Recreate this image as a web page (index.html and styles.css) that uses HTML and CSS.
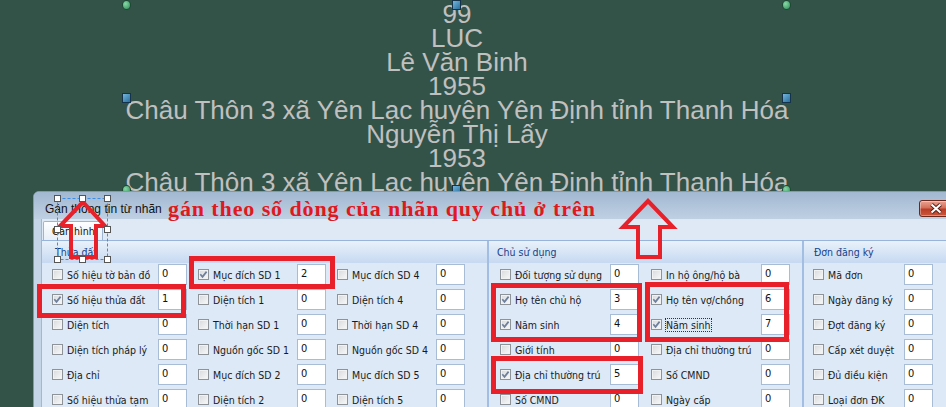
FILE: index.html
```html
<!DOCTYPE html>
<html lang="vi">
<head>
<meta charset="utf-8">
<title>Gán thông tin từ nhãn</title>
<link rel="stylesheet" href="styles.css">
</head>
<body>
<div class="canvas-text">
  <div>99</div>
  <div>LUC</div>
  <div>Lê Văn Binh</div>
  <div>1955</div>
  <div>Châu Thôn 3 xã Yên Lạc huyện Yên Định tỉnh Thanh Hóa</div>
  <div>Nguyễn Thị Lấy</div>
  <div>1953</div>
  <div>Châu Thôn 3 xã Yên Lạc huyện Yên Định tỉnh Thanh Hóa</div>
</div>
<span class="h g h-tl"></span>
<span class="h b h-tc"></span>
<span class="h g h-tr"></span>
<span class="h b h-ml"></span>
<span class="h b h-mr"></span>
<span class="h g h-bl"></span>
<span class="h b h-bc"></span>
<span class="h g h-br"></span>

<div class="dialog">
  <div class="titlebar">
    <span class="title">Gán thông tin từ nhãn</span>
    <span class="close"><svg width="14" height="11" viewBox="0 0 14 11"><path d="M2.5 1.5 L11.5 9.5 M11.5 1.5 L2.5 9.5" stroke="#5b2219" stroke-width="4" fill="none"/><path d="M2.5 1.5 L11.5 9.5 M11.5 1.5 L2.5 9.5" stroke="#fff" stroke-width="2" fill="none"/></svg></span>
  </div>
  <div class="frame">
    <div class="client">
      <div class="tabstrip"><div class="tab">Gán hình</div></div>
      <div class="page">
        <section class="sec">
          <div class="sec-head pad-land">Thửa đất</div>
          <div class="sec-body body-land">
            <div class="f"><i class="cb"></i><span class="lb">Số hiệu tờ bản đồ</span><span class="in">0</span></div>
            <div class="f"><i class="cb on"><svg viewBox="0 0 9 9"><path d="M1.3 4.3 L3.5 6.8 L7.6 1.6"/></svg></i><span class="lb">Mục đích SD 1</span><span class="in">2</span></div>
            <div class="f"><i class="cb"></i><span class="lb">Mục đích SD 4</span><span class="in">0</span></div>

            <div class="f"><i class="cb on"><svg viewBox="0 0 9 9"><path d="M1.3 4.3 L3.5 6.8 L7.6 1.6"/></svg></i><span class="lb">Số hiệu thửa đất</span><span class="in">1</span></div>
            <div class="f"><i class="cb"></i><span class="lb">Diện tích 1</span><span class="in">0</span></div>
            <div class="f"><i class="cb"></i><span class="lb">Diện tích 4</span><span class="in">0</span></div>

            <div class="f"><i class="cb"></i><span class="lb">Diện tích</span><span class="in">0</span></div>
            <div class="f"><i class="cb"></i><span class="lb">Thời hạn SD 1</span><span class="in">0</span></div>
            <div class="f"><i class="cb"></i><span class="lb">Thời hạn SD 4</span><span class="in">0</span></div>

            <div class="f"><i class="cb"></i><span class="lb">Diện tích pháp lý</span><span class="in">0</span></div>
            <div class="f"><i class="cb"></i><span class="lb">Nguồn gốc SD 1</span><span class="in">0</span></div>
            <div class="f"><i class="cb"></i><span class="lb">Nguồn gốc SD 4</span><span class="in">0</span></div>

            <div class="f"><i class="cb"></i><span class="lb">Địa chỉ</span><span class="in">0</span></div>
            <div class="f"><i class="cb"></i><span class="lb">Mục đích SD 2</span><span class="in">0</span></div>
            <div class="f"><i class="cb"></i><span class="lb">Mục đích SD 5</span><span class="in">0</span></div>

            <div class="f"><i class="cb"></i><span class="lb">Số hiệu thửa tạm</span><span class="in">0</span></div>
            <div class="f"><i class="cb"></i><span class="lb">Diện tích 2</span><span class="in">0</span></div>
            <div class="f"><i class="cb"></i><span class="lb">Diện tích 5</span><span class="in">0</span></div>
          </div>
        </section>
        <section class="sec sec-div">
          <div class="sec-head pad-owner">Chủ sử dụng</div>
          <div class="sec-body body-owner">
            <div class="f"><i class="cb"></i><span class="lb">Đối tượng sử dụng</span><span class="in">0</span></div>
            <div class="f"><i class="cb"></i><span class="lb">In hộ ông/hộ bà</span><span class="in">0</span></div>

            <div class="f"><i class="cb on"><svg viewBox="0 0 9 9"><path d="M1.3 4.3 L3.5 6.8 L7.6 1.6"/></svg></i><span class="lb">Họ tên chủ hộ</span><span class="in">3</span></div>
            <div class="f"><i class="cb on"><svg viewBox="0 0 9 9"><path d="M1.3 4.3 L3.5 6.8 L7.6 1.6"/></svg></i><span class="lb">Họ tên vợ/chồng</span><span class="in">6</span></div>

            <div class="f"><i class="cb on"><svg viewBox="0 0 9 9"><path d="M1.3 4.3 L3.5 6.8 L7.6 1.6"/></svg></i><span class="lb">Năm sinh</span><span class="in">4</span></div>
            <div class="f"><i class="cb on"><svg viewBox="0 0 9 9"><path d="M1.3 4.3 L3.5 6.8 L7.6 1.6"/></svg></i><span class="lb"><span class="focus">Năm sinh</span></span><span class="in">7</span></div>

            <div class="f"><i class="cb"></i><span class="lb">Giới tính</span><span class="in">0</span></div>
            <div class="f"><i class="cb"></i><span class="lb">Địa chỉ thường trú</span><span class="in">0</span></div>

            <div class="f"><i class="cb on"><svg viewBox="0 0 9 9"><path d="M1.3 4.3 L3.5 6.8 L7.6 1.6"/></svg></i><span class="lb">Địa chỉ thường trú</span><span class="in">5</span></div>
            <div class="f"><i class="cb"></i><span class="lb">Số CMND</span><span class="in">0</span></div>

            <div class="f"><i class="cb"></i><span class="lb">Số CMND</span><span class="in">0</span></div>
            <div class="f"><i class="cb"></i><span class="lb">Ngày cấp</span><span class="in">0</span></div>
          </div>
        </section>
        <section class="sec sec-div">
          <div class="sec-head pad-reg">Đơn đăng ký</div>
          <div class="sec-body body-reg">
            <div class="f"><i class="cb"></i><span class="lb">Mã đơn</span><span class="in">0</span></div>
            <div class="f"><i class="cb"></i><span class="lb">Ngày đăng ký</span><span class="in">0</span></div>
            <div class="f"><i class="cb"></i><span class="lb">Đợt đăng ký</span><span class="in">0</span></div>
            <div class="f"><i class="cb"></i><span class="lb">Cấp xét duyệt</span><span class="in">0</span></div>
            <div class="f"><i class="cb"></i><span class="lb">Đủ điều kiện</span><span class="in">0</span></div>
            <div class="f"><i class="cb"></i><span class="lb">Loại đơn ĐK</span><span class="in">0</span></div>
          </div>
        </section>
      </div>
    </div>
  </div>
</div>

<div class="note">gán theo số dòng của nhãn quy chủ ở trên</div>

<svg class="overlay" width="946" height="407" viewBox="0 0 946 407">
  <g fill="none" stroke="#e8202a" stroke-width="5">
    <rect x="191.5" y="258.5" width="141" height="28"/>
    <rect x="39.5" y="286.5" width="144" height="29"/>
    <rect x="493.5" y="285.5" width="146" height="54"/>
    <rect x="493.5" y="358.5" width="147" height="33"/>
    <rect x="647.5" y="284.5" width="139" height="55"/>
  </g>
  <g fill="none" stroke="#e8202a" stroke-width="4" stroke-linejoin="miter" stroke-miterlimit="10">
    <polygon points="83,202 105,226 96,226 96,257 71,257 71,226 60,226"/>
    <polygon points="648,201 673,227 660,227 660,257 638,257 638,227 623,227"/>
  </g>
  <rect x="57.5" y="198.5" width="50" height="61" fill="none" stroke="#3b8ee6" stroke-width="1" stroke-dasharray="3 2"/>
  <g fill="#fff" stroke="#555" stroke-width="1">
    <rect x="54.5" y="195.5" width="6" height="6"/>
    <rect x="79.5" y="195.5" width="6" height="6"/>
    <rect x="104.5" y="195.5" width="6" height="6"/>
    <rect x="54.5" y="226.5" width="6" height="6"/>
    <rect x="104.5" y="226.5" width="6" height="6"/>
    <rect x="54.5" y="256.5" width="6" height="6"/>
    <rect x="79.5" y="256.5" width="6" height="6"/>
    <rect x="104.5" y="256.5" width="6" height="6"/>
  </g>
</svg>
</body>
</html>
```
FILE: styles.css
```css
html, body {
  margin: 0;
  padding: 0;
}
body {
  width: 946px;
  height: 407px;
  overflow: hidden;
  position: relative;
  background: #345348;
  font-family: "Liberation Sans", Arial, sans-serif;
}

/* canvas label */
.canvas-text {
  position: absolute;
  left: 0;
  top: 2px;
  width: 914px;
  text-align: center;
  font-size: 26px;
  line-height: 24px;
  color: #c0c0c0;
  white-space: nowrap;
}

.h {
  position: absolute;
  width: 9px;
  height: 10px;
  box-sizing: border-box;
}
.h.g {
  border-radius: 50%;
  background: radial-gradient(circle at 35% 35%, #86d9a6, #2f8a58);
  border: 1px solid #1d4a33;
}
.h.b {
  background: linear-gradient(135deg, #73b6e0, #2b6d9b);
  border: 1px solid #15334a;
}
.h-tl { left: 122px; top: 0; }
.h-tc { left: 452px; top: 0; }
.h-tr { left: 782px; top: 0; }
.h-ml { left: 122px; top: 93px; }
.h-mr { left: 782px; top: 93px; }
.h-bl { left: 122px; top: 185px; }
.h-bc { left: 452px; top: 185px; }
.h-br { left: 782px; top: 185px; }

/* dialog window */
.dialog {
  position: absolute;
  left: 33px;
  top: 191px;
  width: 930px;
  height: 240px;
  box-sizing: border-box;
  border: 1px solid #8198b1;
  border-radius: 6px 6px 0 0;
  background: #c4d5e8;
  overflow: hidden;
}
.titlebar {
  height: 27px;
  display: flex;
  align-items: flex-start;
  background: linear-gradient(#a2b8d1, #bfd0e3);
}
.title {
  padding: 9px 0 0 11px;
  font-size: 12px;
  line-height: 16px;
  color: #111;
}
.close {
  margin: 8px 10px 0 auto;
  width: 33px;
  height: 17px;
  box-sizing: border-box;
  border: 1px solid #6c281d;
  border-radius: 3px;
  background: linear-gradient(#eaa393, #d4705a 45%, #bb3d26 55%, #c9573c);
  box-shadow: inset 0 0 0 1px rgba(255, 255, 255, 0.35);
  display: flex;
  align-items: center;
  justify-content: center;
}
.frame {
  display: flex;
  padding-left: 7px;
  height: 200px;
}
.client {
  flex: 1;
  border-left: 1px solid #9fb8d8;
  background: #dfe9f6;
}
.tabstrip {
  height: 21px;
  padding-left: 1px;
  display: flex;
  align-items: flex-end;
}
.tab {
  width: 60px;
  height: 19px;
  box-sizing: border-box;
  border: 1px solid #9fb4cf;
  border-bottom: none;
  border-radius: 2px 2px 0 0;
  background: linear-gradient(#fdfeff, #e8eff8);
  font-family: "DejaVu Sans Condensed", "Liberation Sans", sans-serif;
  font-size: 10.5px;
  line-height: 18px;
  padding-left: 8px;
  color: #111;
}
.page {
  display: grid;
  grid-template-columns: 445px 315px 1fr;
  border-top: 1px solid #98b4da;
  background: #dde9f7;
}
.sec {
  box-sizing: border-box;
}
.sec-div {
  border-left: 2px solid #a2bfe3;
}
.sec-head {
  height: 22px;
  background: linear-gradient(#e9f1fb, #c6d9f1);
  font-family: "DejaVu Sans Condensed", "Liberation Sans", sans-serif;
  font-size: 10.5px;
  line-height: 22px;
  color: #15428b;
  white-space: nowrap;
}
.pad-land { padding-left: 13px; }
.pad-owner { padding-left: 8px; }
.pad-reg { padding-left: 10px; }

.sec-body {
  display: grid;
  grid-auto-rows: 25px;
  padding-top: 1px;
}
.body-land {
  grid-template-columns: 135px 128px 128px;
  column-gap: 11px;
  padding-left: 10px;
}
.body-owner {
  grid-template-columns: 139px 139px;
  column-gap: 12px;
  padding-left: 11px;
}
.body-reg {
  grid-template-columns: 120px;
  padding-left: 9px;
}

.f {
  display: flex;
  align-items: center;
  height: 21px;
}
.cb {
  flex: none;
  width: 11px;
  height: 11px;
  box-sizing: border-box;
  border: 1px solid #8d9398;
  background: linear-gradient(135deg, #d6d9dc, #f9f9f9);
  box-shadow: inset 0 0 0 1px #f2f2f2;
  margin-right: 4px;
  display: flex;
}
.cb svg {
  width: 9px;
  height: 9px;
  fill: none;
  stroke: #6d7f9d;
  stroke-width: 1.7;
}
.lb {
  flex: 1;
  min-width: 0;
  font-family: "DejaVu Sans Condensed", "Liberation Sans", sans-serif;
  font-size: 10.5px;
  color: #1a1a1a;
  white-space: nowrap;
}
.focus {
  outline: 1px dotted #333;
  outline-offset: 0;
}
.in {
  flex: none;
  width: 29px;
  height: 21px;
  box-sizing: border-box;
  border: 1px solid #a9bcd6;
  background: #fff;
  font-family: "DejaVu Sans Condensed", "Liberation Sans", sans-serif;
  font-size: 11px;
  line-height: 17px;
  padding-left: 3px;
  color: #111;
}

/* annotations */
.note {
  position: absolute;
  left: 168px;
  top: 198px;
  font-family: "Liberation Serif", "Times New Roman", serif;
  font-weight: bold;
  font-size: 22px;
  line-height: 22px;
  letter-spacing: 0.9px;
  color: #e01820;
  white-space: nowrap;
}
.overlay {
  position: absolute;
  left: 0;
  top: 0;
  pointer-events: none;
}
```
